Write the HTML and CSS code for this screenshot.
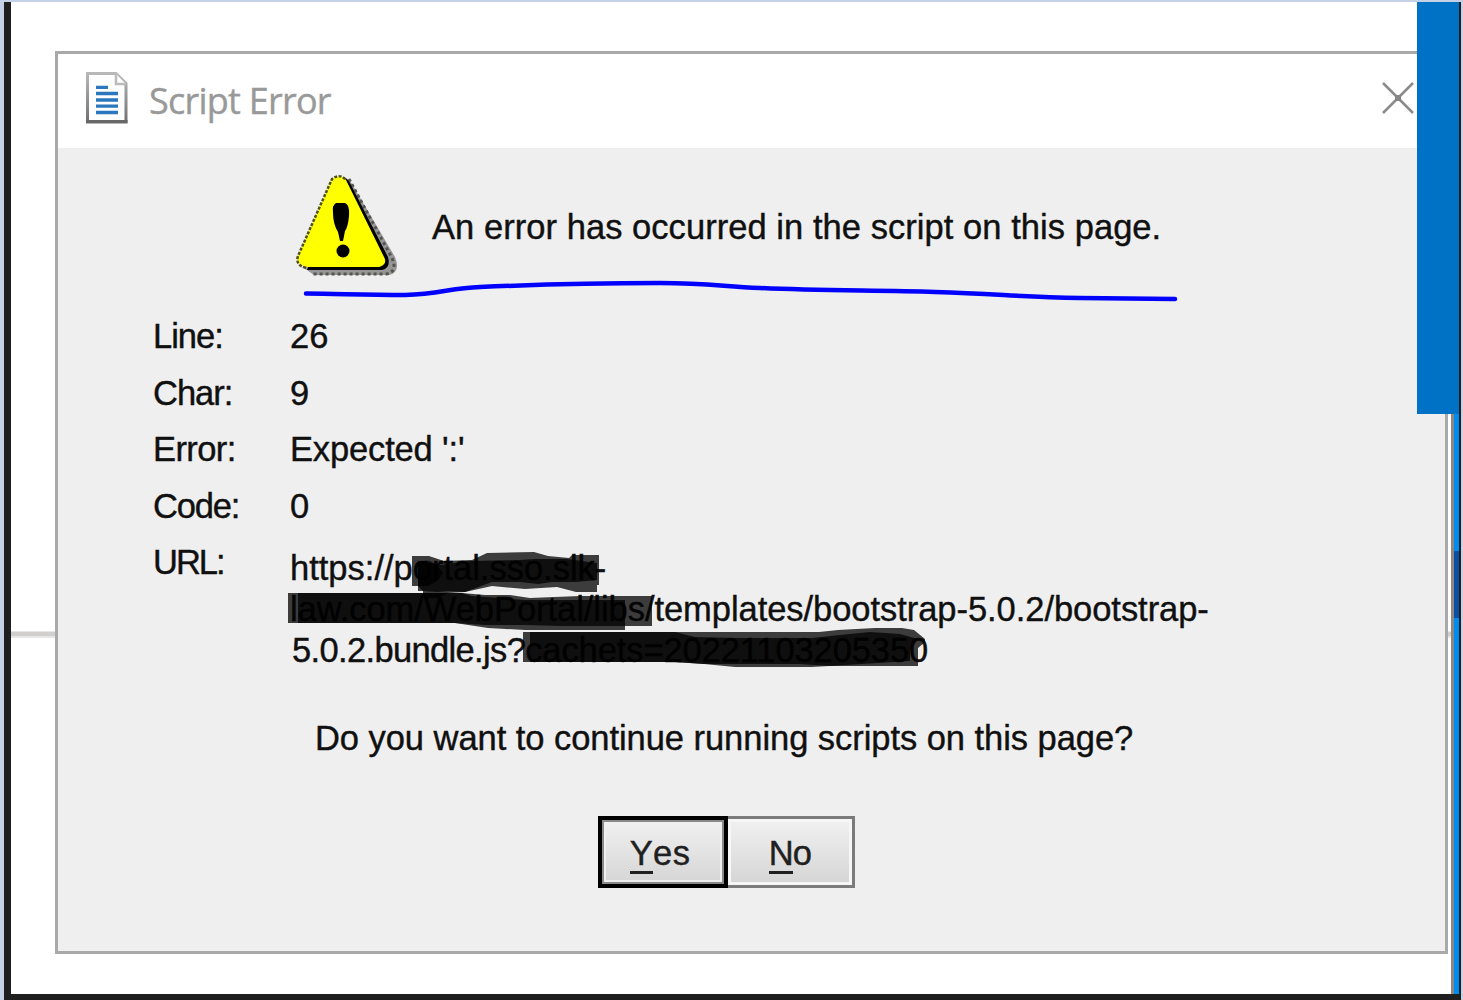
FILE: index.html
```html
<!DOCTYPE html>
<html lang="en">
<head>
<meta charset="utf-8">
<title>Script Error</title>
<link rel="stylesheet" href="styles.css">
</head>
<body>
<div class="frame">
  <div class="rule"></div>
  <div class="rail"><div class="rail-mark"></div></div>
  <section class="dialog">
    <header class="titlebar">
      <svg class="doc" width="42" height="52" viewBox="0 0 42 52">
        <defs><linearGradient id="edge" x1="0" y1="0" x2="0" y2="1"><stop offset="0" stop-color="#b8b8b8"/><stop offset="1" stop-color="#707070"/></linearGradient></defs>
        <path d="M1.500 1.500H30L40 11.500V50H1.500Z" fill="#fdfdfd" stroke="url(#edge)" stroke-width="3"/>
        <path d="M30 2V12H40" fill="#fff" stroke="#bbb" stroke-width="2.500"/>
        <path d="M0 49.500H41.500" stroke="#686868" stroke-width="3"/>
        <path d="M10 15.300H22M10 21.500H32M10 28H32M10 34.200H32M10 40.500H32" stroke="#2b77bd" stroke-width="3.300"/>
      </svg>
      <h1 class="title">Script Error</h1>
      <svg class="close" width="34" height="34" viewBox="0 0 34 34"><path d="M2 2L32 32M32 2L2 32" stroke="#8b8b8b" stroke-width="2.500"/><rect x="14" y="14" width="6" height="6" fill="#858585"/></svg>
    </header>
    <div class="content">
      <div class="alert">
        <svg class="warn" width="104" height="104" viewBox="0 0 104 104">
          <path d="M47 4Q53 4 56 10L99 83Q105 98 93 101H18L8 94Z" fill="#969696"/>
          <path d="M53 5L96 84Q102 98 90 100H15" fill="none" stroke="#55554f" stroke-width="3" stroke-dasharray="3 3"/>
          <path d="M45 3Q51 3 54 9L92 83Q95 94 86 96H11Z" fill="#000"/>
          <path d="M36 5Q44 -1 50 6L88 83Q92 90 83 93H11Q-1 90 2 82Z" fill="#ff0"/>
          <path d="M10 94Q-1 91 2 82L36 5Q44 -1 50 6" fill="none" stroke="#4f4f18" stroke-width="2.500" stroke-dasharray="3 1.500"/>
          <path d="M40 29H49Q54 31 53 42Q52 53 49 57L47 67H44L42 58Q37 50 37 39Q36 31 40 29Z" fill="#000"/>
          <circle cx="47" cy="77" r="6.500" fill="#000"/>
        </svg>
        <p class="message">An error has occurred in the script on this page.</p>
      </div>
      <dl class="details">
        <dt class="t-line">Line:</dt><dd>26</dd>
        <dt class="t-char">Char:</dt><dd>9</dd>
        <dt class="t-error">Error:</dt><dd class="t-expected">Expected ':'</dd>
        <dt class="t-code">Code:</dt><dd>0</dd>
        <dt class="t-url">URL:</dt>
        <dd class="url"><div class="u1">https://portal.sso.slk-</div><div class="u2"><span class="u2-host">law.com/WebPortal/libs</span>/templates/bootstrap-5.0.2/bootstrap-</div><div class="u3">5.0.2.bundle.js?<span class="u3-query">cachets=20221103205350</span></div></dd>
      </dl>
      <p class="question">Do you want to continue running scripts on this page?</p>
      <div class="actions">
        <button class="btn primary"><span class="key">Y</span>es</button><button class="btn"><span class="key">N</span>o</button>
      </div>
    </div>
  </section>
</div>
<div class="panel"></div>
<svg class="marks" width="1463" height="1000" viewBox="0 0 1463 1000">
  <path d="M306 293.500C345 294 365 295 405 295C440 294 450 288 480 287C550 284 610 283 660 283C710 283 725 287 760 288C820 291 880 290 935 292C1000 294 1020 297 1080 298L1175 299" fill="none" stroke="#00f" stroke-width="4.500" stroke-linecap="round"/>
  <g fill="#000" fill-opacity=".75">
    <path d="M412 556H429L444 561L472 560L487 553L534 552L548 556L569 558L572 555H599V585H597V592H576L557 587L525 589L492 586L465 592L448 593L438 598H423V591H418V586H412Z"/>
    <path d="M288 593H462L485 595H510L530 598L580 596H652V626H625V630H525L488 628L455 623H288Z"/>
    <path d="M523 632H819L838 630L875 628H902L914 630L925 639L925 642L918 648V666H829L812 667H735L704 664L675 662H523Z"/>
    <path d="M418 561L441 565L470 561L520 560L535 559H567L597 563V580L576 582H552L538 584L520 582H492L465 592L448 591L438 592L423 591L418 586Z"/>
    <path d="M298 593H462L472 596L500 598L525 600H625V626H560L525 625H485L455 623H298Z"/>
    <path d="M530 632H675L695 637L735 638H812L840 635L870 632L900 634L918 639L910 650V661L829 666L800 664H704L675 662H530Z"/>
    <path d="M418 564Q430 554 443 573Q435 588 418 586Z"/>
  </g>
</svg>
</body>
</html>
```
FILE: styles.css
```css
* { box-sizing: border-box; }
body {
  margin: 0;
  width: 1463px;
  height: 1000px;
  overflow: hidden;
  position: relative;
  background: #c5d1e7;
  padding: 2px 0 0 4px;
  font-family: "Liberation Sans", Arial, sans-serif;
  font-size: 34.5px;
  color: #101010;
  -webkit-text-stroke: 0.4px;
}
.frame {
  position: relative;
  width: 1457px;
  height: 998px;
  background: #fff;
  border: solid #1f1f1f;
  border-width: 0 2px 6px 7px;
  padding: 49px 0 0 44px;
}
.rule {
  position: absolute;
  left: 0;
  right: 0;
  top: 629px;
  height: 7px;
  background: #d0cfcd;
  border: solid #e6e6e5;
  border-width: 1px 0 2px;
}
.rail {
  position: absolute;
  right: 0;
  top: 400px;
  bottom: 0;
  width: 8px;
  background: #008bf0;
  border-left: 3px solid #8c8782;
}
.rail-mark { margin-top: 149px; height: 67px; background: #0b4fa0; }
.dialog {
  position: relative;
  width: 1393px;
  height: 903px;
  background: #efefef;
  border: 3px solid #a9a9a9;
}
.titlebar {
  height: 94px;
  background: #fff;
  display: flex;
  align-items: flex-start;
  padding: 18px 30px 0 28px;
}
.title {
  margin: 4px 0 0 21px;
  font: 400 36px/50px "Open Sans", sans-serif;
  letter-spacing: -0.75px;
  color: #999;
}
.close { margin: 9px 0 0 auto; }
.content { display: flex; flex-direction: column; }
.alert { display: flex; padding: 26px 0 0 238px; height: 160px; }
p, dl, dd { margin: 0; }
.message { margin: 33px 0 0 32px; line-height: 40px; letter-spacing: 0.05px; }
.details {
  display: grid;
  grid-template-columns: 137px 1fr;
  grid-template-rows: repeat(4, 56.6px);
  padding: 8px 0 0 95px;
  line-height: 40px;
  height: 410px;
}
.t-line { letter-spacing: -1px; }
.t-char { letter-spacing: -1px; }
.t-error { letter-spacing: -0.6px; }
.t-code { letter-spacing: -1.2px; }
.t-url { letter-spacing: -2px; }
.t-expected { letter-spacing: -0.15px; }
.url { padding-top: 6px; line-height: 40.7px; white-space: nowrap; }
.u2 { letter-spacing: -0.05px; }
.u3 { padding-left: 2px; letter-spacing: -0.65px; }
.u3-query { letter-spacing: -0.1px; }
.question { padding-left: 257px; line-height: 40px; letter-spacing: -0.05px; }
.actions { display: flex; padding: 58px 0 0 540px; }
.btn {
  width: 127px;
  height: 72px;
  border: 3px solid #7b7b7b;
  border-left-width: 0;
  background: linear-gradient(#f0f1f0, #d5d5d5);
  box-shadow: inset 0 0 0 3px #f6f6f6;
  font: 34.5px "Liberation Sans", Arial, sans-serif;
  letter-spacing: -0.8px;
  color: #202020;
  padding: 4px 0 0;
}
.btn.primary {
  width: 130px;
  border: 4px solid #000;
  box-shadow: inset 0 0 0 2px #8a8a8a, inset 0 0 0 4px #f0f0f0;
  letter-spacing: 0.4px;
  padding-right: 6px;
}
.key { border-bottom: 3px solid #202020; display: inline-block; line-height: 35px; }
.panel { position: absolute; left: 1417px; top: 2px; width: 42px; height: 412px; background: #0072c6; }
.marks { position: absolute; left: 0; top: 0; }
```
